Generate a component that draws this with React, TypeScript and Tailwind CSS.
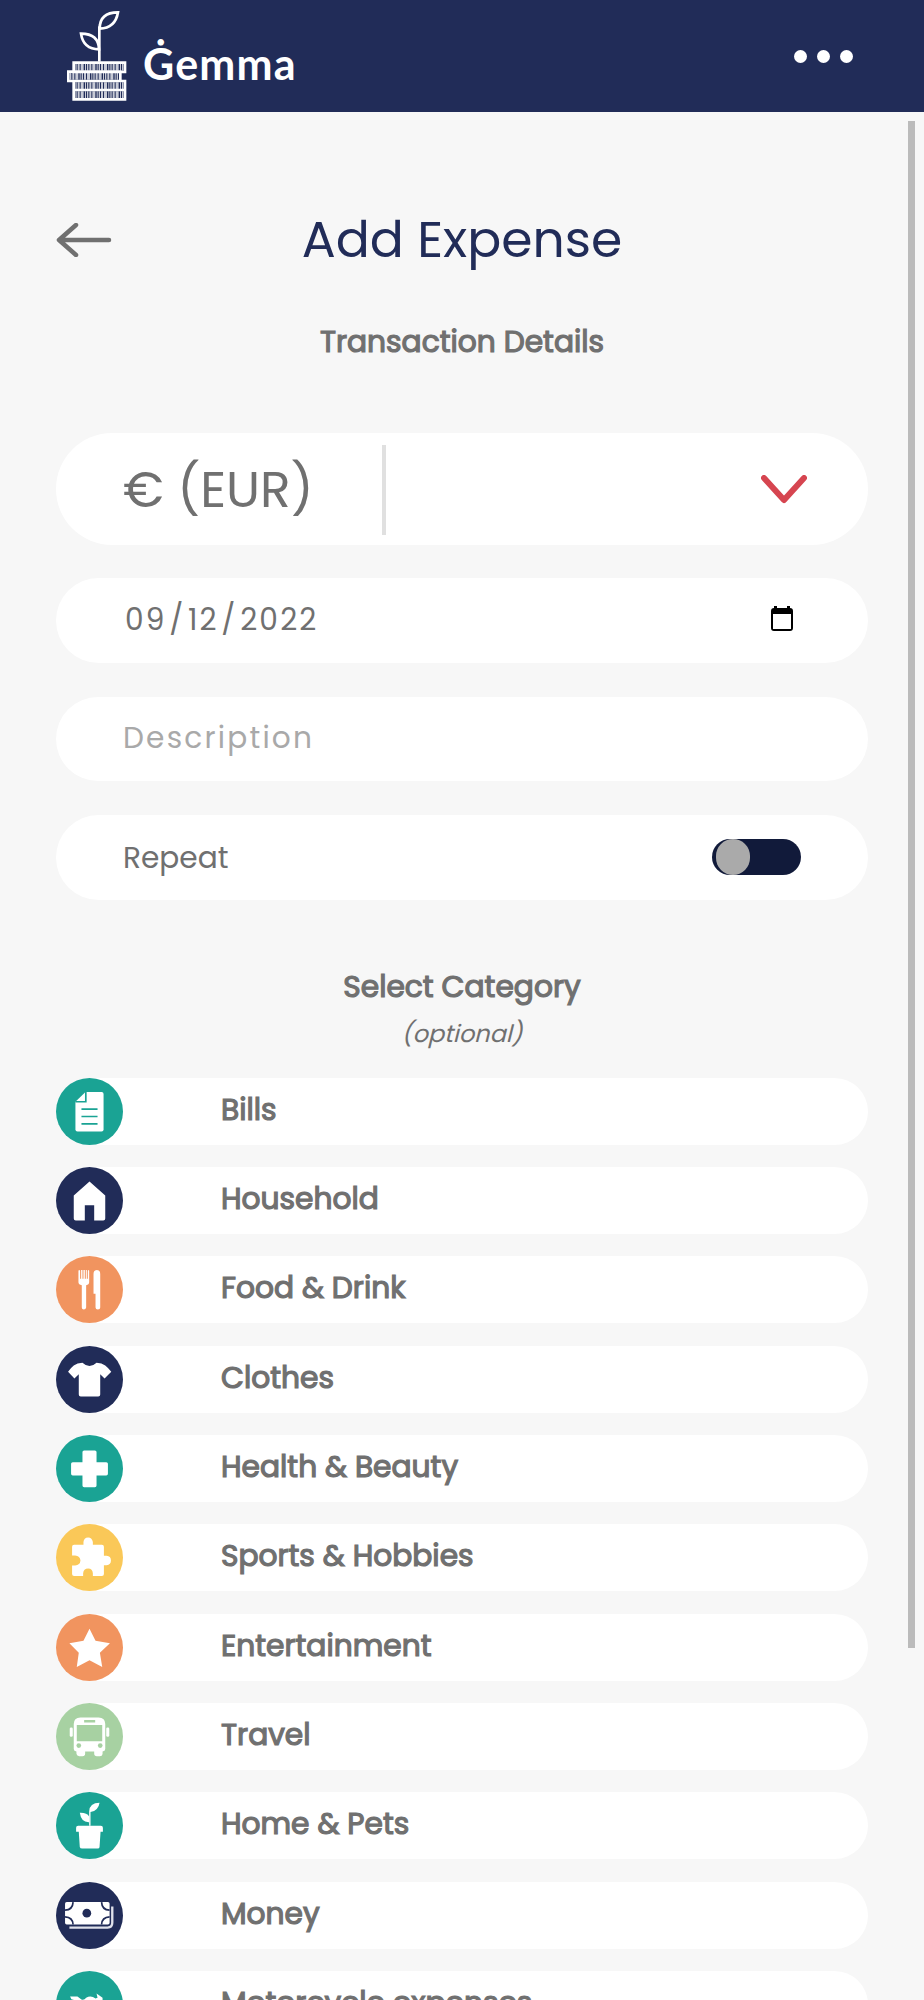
import { useState } from 'react'
import type { ReactNode } from 'react'

type Category = {
    name: string
    color: string
    icon: ReactNode
}

const TEAL = '#1aa394'
const NAVY = '#212c58'

const categories: Category[] = [
    {
        name: 'Bills',
        color: 'text-[#1aa394]',
        icon: (
            <>
                <path d="M88 42H136Q142 42 142 48V154Q142 160 136 160H64Q58 160 58 154V71Z" />
                <path d="M89 42V71H58M76 93H124M76 115H124M76 137H124" fill="none" stroke={TEAL} strokeWidth="5" />
            </>
        ),
    },
    {
        name: 'Household',
        color: 'text-[#212c58]',
        icon: <path d="M100 43L147 85V154Q147 160 141 160H114V114H86V160H59Q53 160 53 154V85Z" />,
    },
    {
        name: 'Food & Drink',
        color: 'text-[#f1945f]',
        icon: (
            <>
                <path d="M67 44Q69 40 72 44V68H75V42H79V68H82V42H86V68H89V42H92V68H95V44Q98 40 99 44V78Q99 85 90 87V154Q89 160 83 160Q77 160 77 154V87Q67 85 67 78Z" />
                <path d="M112 54Q112 42 122 42Q132 42 132 54V154Q132 160 125 160Q118 160 118 154V113H112Z" />
            </>
        ),
    },
    {
        name: 'Clothes',
        color: 'text-[#212c58]',
        icon: <path d="M79 50Q100 70 121 50Q137 51 147 58Q156 65 165 77L145 97L132 84V145Q132 151 126 151H74Q68 151 68 145V84L55 97L36 77Q44 65 53 58Q63 51 79 50Z" />,
    },
    {
        name: 'Health & Beauty',
        color: 'text-[#1aa394]',
        icon: <path d="M84 46H116Q121 46 121 51V81H150Q155 81 155 86V116Q155 121 150 121H121V151Q121 156 116 156H84Q79 156 79 151V121H50Q45 121 45 116V86Q45 81 50 81H79V51Q79 46 84 46Z" />,
    },
    {
        name: 'Sports & Hobbies',
        color: 'text-[#fac858]',
        icon: <path d="M54 62H82V54Q83 40 96 40Q108 40 110 54V62H137Q143 62 143 68V95H151Q164 96 164 109Q164 122 151 123H143V149Q143 155 137 155H110V147Q109 133 96 133Q82 133 81 147V155H54Q48 155 48 149V124H57Q72 123 73 109Q72 95 57 94H48V68Q48 62 54 62Z" />,
    },
    {
        name: 'Entertainment',
        color: 'text-[#f1945f]',
        icon: <path d="M100 44L118 80L161 87L131 116L138 158L100 138L62 158L68 116L40 87L82 80Z" />,
    },
    {
        name: 'Travel',
        color: 'text-[#a7d1a2]',
        icon: (
            <>
                <path
                    fillRule="evenodd"
                    d="M73 43H127Q147 43 147 63V137Q147 144 139 145V152Q138 159 131 159H122Q114 159 114 151V145H87V151Q87 159 79 159H69Q61 158 61 151V145Q53 144 53 137V63Q53 43 73 43ZM62 66V114H138V66ZM84 51V58H117V51Z"
                />
                <rect x="41" y="73" width="9" height="28" rx="4" />
                <rect x="150" y="73" width="9" height="28" rx="4" />
                <circle cx="68" cy="127" r="7" fill="#a7d1a2" />
                <circle cx="132" cy="127" r="7" fill="#a7d1a2" />
            </>
        ),
    },
    {
        name: 'Home & Pets',
        color: 'text-[#1aa394]',
        icon: (
            <>
                <path d="M66 101H134Q140 101 140 107V119H133L130 164Q130 169 124 169H78Q72 169 71 164L68 119H60V107Q60 101 66 101Z" />
                <path d="M99 101V58Q100 32 130 32Q127 55 103 60V101Z" />
                <path d="M71 62Q92 61 99 73V90Q75 91 71 62Z" />
            </>
        ),
    },
    {
        name: 'Money',
        color: 'text-[#212c58]',
        icon: (
            <>
                <rect x="27" y="60" width="133" height="67" rx="5" />
                <g fill="none" stroke={NAVY} strokeWidth="5">
                    <path d="M51 60Q50 83 27 84M27 104Q50 105 51 127M136 60Q137 83 160 84M160 104Q137 105 136 127" />
                </g>
                <circle cx="92" cy="93" r="13" fill={NAVY} />
                <path d="M40 136H154Q168 136 168 122V73" fill="none" stroke="#dfe1ea" strokeWidth="7" />
            </>
        ),
    },
    {
        name: 'Motorcycle expenses',
        color: 'text-[#1aa394]',
        icon: <path d="M42 76H64L76 85Q84 88 90 80Q104 72 118 82L124 80L121 67L139 80V92L160 130H42L58 88L46 84Z" />,
    },
]

function Logo() {
    return (
        <svg className="h-[94px] w-[62px]" viewBox="0 0 186 282" fill="none" stroke="white" strokeWidth="8">
            <path d="M97 158V52" />
            <path d="M98 59Q98 10 153 10Q145 58 98 59Z" />
            <path d="M96 121Q49 121 42 74Q95 74 96 121Z" />
            <path d="M20 161H174V189H20ZM4 188H160V216H4ZM20 216H174V243H20ZM20 243H174V271H20Z" />
            <path
                d="M25 175H170M9 202H156M25 230H170M25 257H170"
                strokeWidth="20"
                strokeDasharray="4 3 6 3 9 4 3 3"
                strokeOpacity="0.75"
            />
        </svg>
    )
}

function Field({ className, children }: { className: string; children: ReactNode }) {
    return <div className={`flex items-center rounded-full bg-white text-[#707070] ${className}`}>{children}</div>
}

function CategoryRow({ category }: { category: Category }) {
    return (
        <li className="flex h-[67px] items-center rounded-full bg-white">
            <svg className={`h-[67px] w-[67px] shrink-0 ${category.color}`} viewBox="0 0 200 200" fill="white">
                <circle cx="100" cy="100" r="100" fill="currentColor" />
                {category.icon}
            </svg>
            <span className="ml-[98px] pb-[3px] text-[29.7px] leading-10 whitespace-nowrap [-webkit-text-stroke:1.2px_currentColor]">
                {category.name}
            </span>
        </li>
    )
}

export default function App() {
    const [repeat, setRepeat] = useState(false)

    return (
        <div className="h-[2000px] w-[924px] overflow-hidden bg-[#f7f7f7] font-['Poppins','Inter',sans-serif] text-[#707070]">
            <header className="flex h-[111.5px] items-start justify-between bg-[#212c58] pr-[71px] pl-[67px]">
                <div className="flex pt-[9px]">
                    <Logo />
                    <span className="mt-[31px] ml-[14px] font-['Lato',sans-serif] text-[43px] leading-[48px] font-bold tracking-[1.2px] text-white">
                        Ġemma
                    </span>
                </div>
                <button className="mt-[50px] flex gap-[10px]">
                    <span className="size-[13px] rounded-full bg-white" />
                    <span className="size-[13px] rounded-full bg-white" />
                    <span className="size-[13px] rounded-full bg-white" />
                </button>
            </header>

            <div className="flex h-[1888.5px]">
                <main className="w-[868px] pl-14">
                    <div className="mt-[96.5px] grid h-16 grid-cols-[56px_1fr_56px] items-center">
                        <button>
                            <svg className="h-[34px] w-14" viewBox="0 0 56 34" fill="none" stroke="#707070" strokeWidth="4.5" strokeLinecap="round" strokeLinejoin="round">
                                <path d="M53 17H3M20 2L3 17L20 32" />
                            </svg>
                        </button>
                        <h1 className="text-center text-[50.4px] leading-[64px] whitespace-nowrap text-[#212c58]">Add Expense</h1>
                    </div>
                    <h2 className="mt-[50px] text-center text-[29.7px] leading-10 [-webkit-text-stroke:1.2px_currentColor]">
                        Transaction Details
                    </h2>

                    <div className="mt-[71.3px] flex flex-col gap-[33.6px]">
                        <Field className="h-[111.5px] pt-px pr-[61px] pl-[67px]">
                            <span className="w-[259px] text-[50.4px]">€ (EUR)</span>
                            <span className="h-[90px] w-1 bg-[#e0e0e0]" />
                            <svg className="ml-auto h-[29px] w-[46px]" viewBox="0 0 46 29" fill="none" stroke="#d64550" strokeWidth="6" strokeLinecap="round" strokeLinejoin="round">
                                <path d="M3 3L23 25L43 3" />
                            </svg>
                        </Field>
                        <Field className="h-[84.7px] pr-[75px] pl-[69px]">
                            <span className="pb-[2px] text-[29.6px] tracking-[2.2px]">
                                09<span className="px-[2.5px]">/</span>12<span className="px-[2.5px]">/</span>2022
                            </span>
                            <svg className="mb-1 ml-auto h-[25px] w-[22px]" viewBox="0 0 22 25">
                                <path d="M3 2V0H6V2H16V0H19V2Q22 2 22 5V22Q22 25 19 25H3Q0 25 0 22V5Q0 2 3 2ZM2 8V23H20V8Z" fill="black" fillRule="evenodd" />
                            </svg>
                        </Field>
                        <Field className="h-[84.7px] pl-[67px]">
                            <span className="pb-[2px] text-[29.6px] tracking-[2.2px] text-[#a9a9a9]">Description</span>
                        </Field>
                        <Field className="h-[84.7px] pr-[67px] pl-[67px]">
                            <span className="pt-[2px] text-[29.6px]">Repeat</span>
                            <button
                                onClick={() => setRepeat(!repeat)}
                                className={`ml-auto flex h-9 w-[89px] rounded-full bg-[#111a3a] px-1 ${repeat ? 'justify-end' : ''}`}
                            >
                                <span className="h-9 w-[34px] rounded-full bg-[#aaaaaa]" />
                            </button>
                        </Field>
                    </div>

                    <h2 className="mt-[67px] text-center text-[29.7px] leading-10 [-webkit-text-stroke:1.2px_currentColor]">
                        Select Category
                    </h2>
                    <p className="mt-[9px] -skew-x-[14deg] pl-1 text-center text-[24px] leading-9">(optional)</p>

                    <ul className="mt-[26px] flex flex-col gap-[22.33px]">
                        {categories.map((category) => (
                            <CategoryRow key={category.name} category={category} />
                        ))}
                    </ul>
                </main>
                <div className="mt-[9px] ml-10 h-[1527px] w-[7px] bg-[#bbbbbb]" />
            </div>
        </div>
    )
}
